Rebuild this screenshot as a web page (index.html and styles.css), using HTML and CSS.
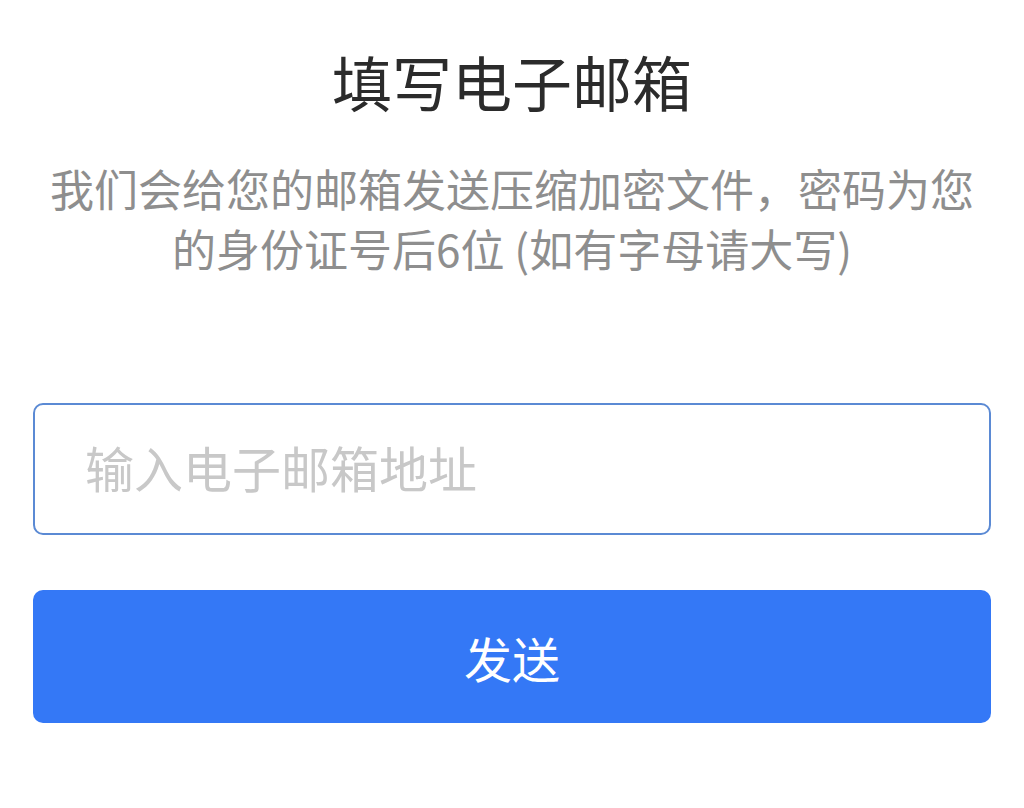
FILE: index.html
```html
<!DOCTYPE html>
<html lang="zh-CN">
<head>
  <meta charset="UTF-8" />
  <meta name="viewport" content="width=device-width, initial-scale=1.0"/>
  <title>填写电子邮箱</title>
  <link rel="stylesheet" href="styles.css">
</head>
<body>
  <div class="container">
    <h2 class="title">填写电子邮箱</h2>
    <p class="desc">我们会给您的邮箱发送压缩加密文件，密码为您<br>的身份证号后6位 (如有字母请大写)</p>
    <form class="mail-form" autocomplete="off">
      <input type="email" class="mail-input" placeholder="输入电子邮箱地址">
      <button type="button" class="send-btn">发送</button>
    </form>
  </div>
</body>
</html>
```

FILE: styles.css
```css
body { margin: 0; background: #fff; font-family: "Noto Sans CJK SC", "Noto Sans", sans-serif; }
.container { padding: 40px 33px 0; }
.title { margin: 0; text-align: center; font-size: 60px; line-height: 82px; font-weight: 400; color: #2b2b2b; }
.desc { margin: 36px 0 0; text-align: center; font-size: 44px; line-height: 60px; color: #8e8e8e; }
.mail-form { margin-top: 125px; display: flex; flex-direction: column; gap: 55px; }
.mail-input {
  box-sizing: border-box; width: 100%; height: 132px;
  border: 2px solid #5b8ad4; border-radius: 10px;
  padding: 0 50px 6px; font-family: inherit; font-size: 49px; color: #333; outline: none;
}
.mail-input::placeholder { color: #c8c8c8; }
.send-btn {
  width: 100%; height: 133px; border: none; border-radius: 10px;
  background: #3478f6; color: #fff; font-family: inherit; font-size: 48px; cursor: pointer;
}
```
